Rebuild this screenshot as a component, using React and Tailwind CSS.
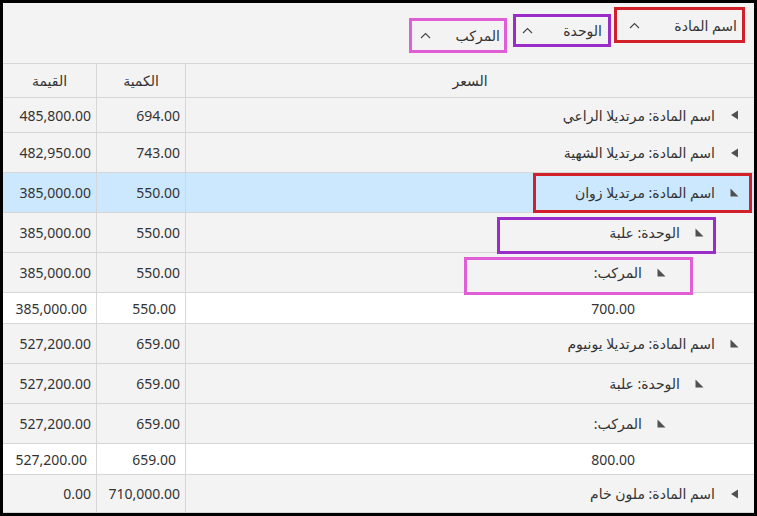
import React from 'react';

const FONT = { fontFamily: '"Noto Sans", "DejaVu Sans", sans-serif' };

const rows = [
  { kind: 'group', level: 1, open: false, text: 'اسم المادة: مرتديلا الراعي', qty: '694.00', val: '485,800.00', h: 'h-[35px]' },
  { kind: 'group', level: 1, open: false, text: 'اسم المادة: مرتديلا الشهية', qty: '743.00', val: '482,950.00', h: 'h-[40px]' },
  { kind: 'group', level: 1, open: true, selected: true, mark: 'red', text: 'اسم المادة: مرتديلا زوان', qty: '550.00', val: '385,000.00', h: 'h-[40px]' },
  { kind: 'group', level: 2, open: true, mark: 'purple', text: 'الوحدة: علبة', qty: '550.00', val: '385,000.00', h: 'h-[40px]' },
  { kind: 'group', level: 3, open: true, mark: 'pink', text: 'المركب:', qty: '550.00', val: '385,000.00', h: 'h-[40px]' },
  { kind: 'data', price: '700.00', qty: '550.00', val: '385,000.00' },
  { kind: 'group', level: 1, open: true, text: 'اسم المادة: مرتديلا يونيوم', qty: '659.00', val: '527,200.00', h: 'h-[40px]' },
  { kind: 'group', level: 2, open: true, text: 'الوحدة: علبة', qty: '659.00', val: '527,200.00', h: 'h-[40px]' },
  { kind: 'group', level: 3, open: true, text: 'المركب:', qty: '659.00', val: '527,200.00', h: 'h-[40px]' },
  { kind: 'data', price: '800.00', qty: '659.00', val: '527,200.00' },
  { kind: 'group', level: 1, open: false, text: 'اسم المادة: ملون خام', qty: '710,000.00', val: '0.00', h: 'h-[38px]' },
];

// padding from the right edge for each group level
const levelPad = { 1: 'pr-[15px]', 2: 'pr-[50px]', 3: 'pr-[88px]' };

export default function App() {
  return (
    <div className="w-[757px] h-[516px] bg-black p-[3px] overflow-hidden" style={FONT}>
      <div className="w-full h-full bg-[#f3f3f3] text-[14px] text-[#333] overflow-hidden flex flex-col">
        {/* Group panel */}
        <div className="h-[61px] shrink-0 border-b border-[#d6d6d6] flex flex-row-reverse items-start pr-[9px]" dir="ltr">
          <GroupChip label="اسم المادة" color="border-[#d2202a]" cls="mt-[4px] w-[131px] h-[36px] pr-[5px] pl-[12px]" />
          <GroupChip label="الوحدة" color="border-[#9a2cc8]" cls="mt-[11px] mr-[3px] w-[98px] h-[33px] pr-[6px] pl-[6px]" />
          <GroupChip label="المركب" color="border-[#e05fd6]" cls="mt-[15px] mr-[6px] w-[98px] h-[35px] pr-[4px] pl-[8px]" />
        </div>

        {/* Column headers */}
        <div className="grid grid-cols-[94px_89px_1fr] h-[34px] shrink-0 border-b border-[#d6d6d6]">
          <div className="border-r border-[#d6d6d6] flex items-center justify-center" dir="rtl">القيمة</div>
          <div className="border-r border-[#d6d6d6] flex items-center justify-center" dir="rtl">الكمية</div>
          <div className="flex items-center justify-center" dir="rtl">السعر</div>
        </div>

        {rows.map((r, i) => (r.kind === 'group' ? <GroupRow key={i} r={r} /> : <DataRow key={i} r={r} />))}
      </div>
    </div>
  );
}

function GroupChip({ label, color, cls }) {
  return (
    <div className={`border-[3px] ${color} ${cls} flex items-center justify-between`}>
      <ChevronUp />
      <span dir="rtl">{label}</span>
    </div>
  );
}

function GroupRow({ r }) {
  return (
    <div
      className={`grid grid-cols-[94px_89px_1fr] ${r.h} shrink-0 border-b border-[#d6d6d6] ${
        r.selected ? 'bg-[#cce8ff]' : ''
      }`}
    >
      <div className="border-r border-[#d6d6d6] flex items-center justify-end pr-[5px]">{r.val}</div>
      <div className="border-r border-[#d6d6d6] flex items-center justify-end pr-[5px]">{r.qty}</div>
      <div className={`relative flex items-center justify-end gap-[15px] ${levelPad[r.level]}`}>
        <span dir="rtl">{r.text}</span>
        {r.open ? <Expanded /> : <Collapsed />}
        {r.mark === 'red' && (
          <div className="absolute right-[2px] top-0 w-[219px] h-[40px] border-[3px] border-[#d2202a]" />
        )}
        {r.mark === 'purple' && (
          <div className="absolute right-[38px] top-[4px] w-[219px] h-[37px] border-[3px] border-[#9a2cc8]" />
        )}
        {r.mark === 'pink' && (
          <div className="absolute right-[61px] top-[4px] w-[229px] h-[38px] border-[3px] border-[#e05fd6]" />
        )}
      </div>
    </div>
  );
}

function DataRow({ r }) {
  return (
    <div className="grid grid-cols-[94px_89px_1fr] h-[31px] shrink-0 border-b border-[#d6d6d6] bg-white">
      <div className="border-r border-[#d6d6d6] flex items-center justify-end pr-[9px]">{r.val}</div>
      <div className="border-r border-[#d6d6d6] flex items-center justify-end pr-[9px]">{r.qty}</div>
      <div className="flex items-center justify-end pr-[119px]">{r.price}</div>
    </div>
  );
}

function ChevronUp() {
  return (
    <svg width="11" height="7" viewBox="0 0 11 7" className="shrink-0">
      <path d="M1 6L5.5 1.5 10 6" fill="none" stroke="#444" strokeWidth="1.1" />
    </svg>
  );
}

function Collapsed() {
  return (
    <svg width="9" height="10" viewBox="0 0 9 10" className="shrink-0">
      <polygon points="8,0.5 8,9.5 1,5" fill="#505050" />
    </svg>
  );
}

function Expanded() {
  return (
    <svg width="9" height="9" viewBox="0 0 9 9" className="shrink-0">
      <polygon points="0.5,0.5 0.5,8.5 8.5,8.5" fill="#505050" />
    </svg>
  );
}
